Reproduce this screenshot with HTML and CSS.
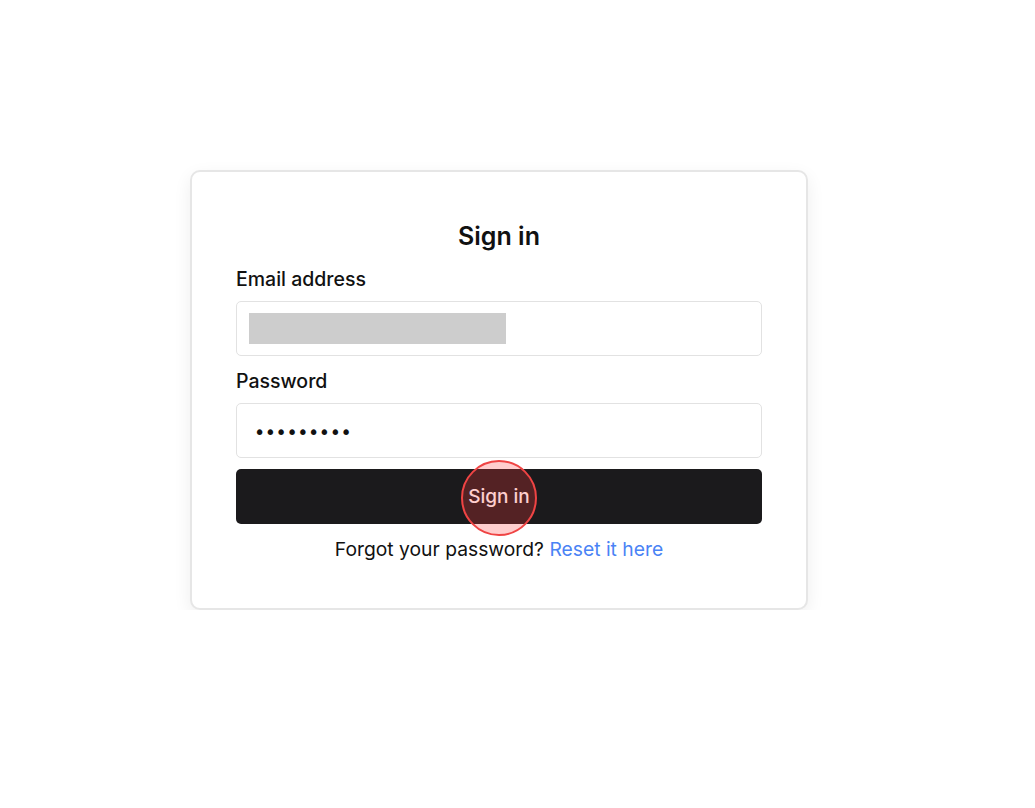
FILE: index.html
```html
<!DOCTYPE html>
<html>
<head>
<meta charset="utf-8">
<link rel="stylesheet" href="styles.css">
</head>
<body>
<div class="page">
  <div class="card">
    <h1 class="title">Sign in</h1>
    <label class="label">Email address</label>
    <div class="input"><span class="redact"></span></div>
    <label class="label">Password</label>
    <div class="input pw">•••••••••</div>
    <div class="btn-wrap">
      <button class="btn">Sign in</button>
      <span class="click"></span>
    </div>
    <p class="forgot">Forgot your password? <a class="link">Reset it here</a></p>
  </div>
</div>
</body>
</html>
```
FILE: styles.css
```css
html, body { margin: 0; background: #fff; }
body { font-family: Inter, "Noto Sans", sans-serif; color: #111; }
.page { padding: 170px 0 0 190px; }
.card {
  width: 526px;
  padding: 43px 44px 47px;
  border: 2px solid #e6e6e6;
  border-radius: 10px;
  box-shadow: 0 6px 18px rgba(0,0,0,0.07);
  background: #fff;
  display: flex;
  flex-direction: column;
}
.title { margin: 6px 0 17px; font-size: 25px; font-weight: 600; text-align: center; line-height: 30px; }
.label { font-size: 19.5px; line-height: 22px; margin-bottom: 11px; font-weight: 450; }
.input {
  height: 53px;
  border: 1px solid #e2e2e2;
  border-radius: 5px;
  display: flex;
  align-items: center;
  padding: 0 12px;
  margin-bottom: 14px;
}
.redact { width: 257px; height: 31px; background: #cdcdcd; }
.pw { font-size: 19px; letter-spacing: -0.4px; padding: 3px 0 0 17px; height: 50px; font-family: "DejaVu Sans", sans-serif; margin-bottom: 11px; }
.btn-wrap { position: relative; }
.btn {
  width: 100%; height: 55px; background: #1b1a1c; color: #fff; border: 0; border-radius: 5px;
  font-family: Inter, sans-serif; font-size: 19px; font-weight: 500;
}
.click {
  position: absolute; left: 225px; top: -9px; width: 72px; height: 72px; border-radius: 50%;
  border: 2px solid #ef4444; background: rgba(255,60,60,0.25);
}
.forgot { margin: 13px 0 0; text-align: center; font-size: 19.3px; line-height: 24px; }
.link { color: #4a83f5; }
```
